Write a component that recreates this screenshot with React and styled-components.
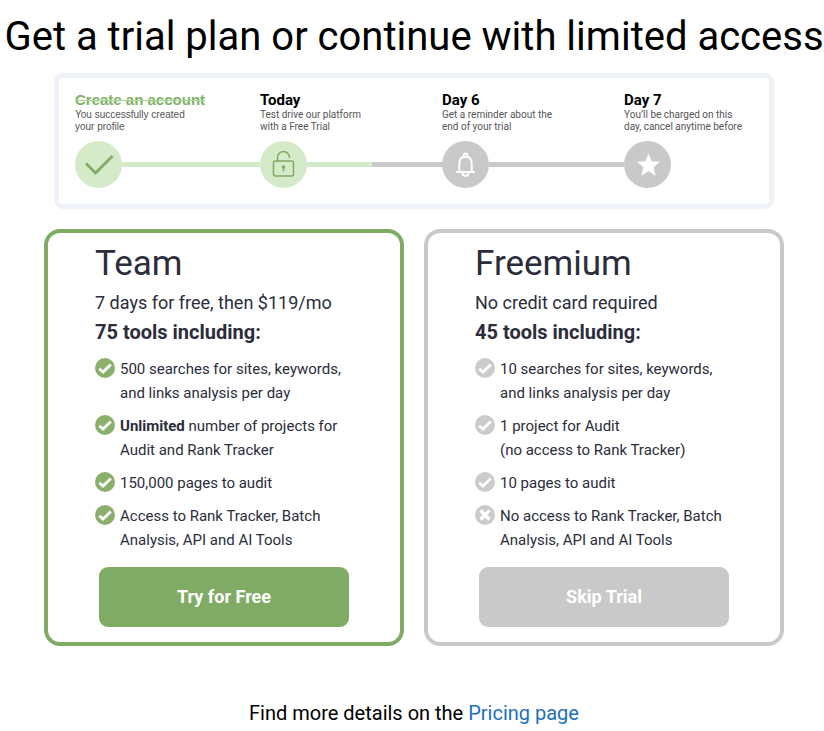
import React from 'react';
import styled, { createGlobalStyle, css } from 'styled-components';

const GlobalStyle = createGlobalStyle`
  * {
    box-sizing: border-box;
  }

  body {
    margin: 0;
    background-color: #fff;
    color: #000;
    font-family: Roboto, 'Liberation Sans', sans-serif;
  }
`;

const green = '#80ab65';
const gray = '#c9c9c9';

const Page = styled.main`
  display: flex;
  flex-direction: column;
  align-items: center;
  padding: 13px 0 0 4px;
`;

const Title = styled.h1`
  margin: 0 0 12px;
  font-size: 40px;
  font-weight: 400;
  line-height: 48px;
  text-align: center;
`;

const Timeline = styled.ol`
  display: grid;
  grid-template-columns: 185fr 182fr 182fr 129fr;
  width: 100%;
  max-width: 720px;
  margin: 0 0 20px;
  padding: 13px 16px 16px;
  list-style: none;
  border: 5px solid #eff3f8;
  border-radius: 9px;
`;

const StepTitle = styled.h2`
  margin: 0;
  font-size: 15px;
  font-weight: 700;
  line-height: 18px;
`;

const StepText = styled.p`
  margin: 0 0 8px;
  font-size: 10px;
  line-height: 12px;
  color: #555;
  white-space: nowrap;
`;

const Step = styled.li`
  ${({ $done }) =>
    $done &&
    css`
      font-family: 'Liberation Sans', sans-serif;

      ${StepTitle} {
        color: #7fb366;
        text-decoration: line-through 1px #a9d496;
      }
    `}
`;

const Track = styled.div`
  display: flex;
  align-items: center;
`;

const Circle = styled.div`
  display: flex;
  justify-content: center;
  align-items: center;
  width: 47px;
  height: 47px;
  border-radius: 50%;
  color: ${({ $active }) => ($active ? green : '#fff')};
  background-color: ${({ $active }) => ($active ? '#d5eac8' : gray)};
`;

const lines = {
  done: '#d5eac8',
  half: `linear-gradient(90deg, #d5eac8 48%, ${gray} 48%)`,
  todo: gray,
};

const Line = styled.div`
  flex: 1;
  height: 5px;
  background: ${({ $type }) => lines[$type]};
`;

const Plans = styled.section`
  display: grid;
  grid-template-columns: 1fr 1fr;
  gap: 20px;
  width: 100%;
  max-width: 740px;
`;

const Card = styled.article`
  display: flex;
  flex-direction: column;
  padding: 7px 47px 15px;
  border: 4px solid ${({ $color }) => $color};
  border-radius: 16px;
  color: #2b2d3b;
`;

const PlanName = styled.h2`
  margin: 0;
  font-size: 35px;
  font-weight: 400;
  line-height: 48px;
`;

const Price = styled.p`
  margin: 0;
  font-size: 18px;
  line-height: 30px;
`;

const Tools = styled.p`
  margin: 0 0 11px;
  font-size: 20px;
  font-weight: 700;
  line-height: 28px;
`;

const Features = styled.ul`
  display: flex;
  flex-direction: column;
  gap: 9px;
  margin: 0 0 15px;
  padding: 0;
  list-style: none;
`;

const Feature = styled.li`
  display: flex;
  align-items: flex-start;
  gap: 5px;
  font-size: 15px;
  line-height: 24px;

  svg {
    flex: none;
    margin-top: 1px;
  }
`;

const Button = styled.button`
  align-self: center;
  width: 100%;
  max-width: 250px;
  height: 60px;
  padding: 0 0 2px;
  border: none;
  border-radius: 9px;
  font-family: inherit;
  font-size: 18px;
  font-weight: 700;
  color: #fff;
  background-color: ${({ $color }) => $color};
  cursor: pointer;
`;

const Details = styled.p`
  margin: 55px 0 0;
  font-size: 20px;
  line-height: 24px;
`;

const Link = styled.a`
  color: #1c6fc0;
  text-decoration: none;
`;

const DoneIcon = () => (
  <svg width="47" height="47" viewBox="0 0 47 47" fill="none" aria-hidden="true">
    <path d="M11 22.5L20.5 32L37.5 15" stroke="currentColor" strokeWidth="2.7" />
  </svg>
);

const LockIcon = () => (
  <svg width="47" height="47" viewBox="0 0 47 47" fill="none" aria-hidden="true">
    <g stroke="currentColor" strokeWidth="1.5">
      <rect x="13.5" y="20" width="20" height="15" rx="2" />
      <path d="M17.5 20v-3.5a6 6 0 0 1 12 0" strokeLinecap="round" />
    </g>
    <circle cx="23.5" cy="26" r="1.7" fill="currentColor" />
    <path d="M23.5 26v4.5" stroke="currentColor" strokeWidth="1.5" />
  </svg>
);

const BellIcon = () => (
  <svg width="47" height="47" viewBox="0 0 47 47" fill="none" aria-hidden="true">
    <g stroke="currentColor" strokeWidth="2" strokeLinecap="round" strokeLinejoin="round">
      <path d="M15 31h17M17.3 31v-8.5c0-4.2 2.5-6.7 6.2-6.7s6.2 2.5 6.2 6.7V31" />
      <path d="M21.6 15.8v-1.3a1.9 1.9 0 0 1 3.8 0v1.3" />
      <path d="M20.5 31.5c0 2 1.2 3.4 3 3.4s3-1.4 3-3.4" />
    </g>
  </svg>
);

const StarIcon = () => (
  <svg width="47" height="47" viewBox="0 0 47 47" aria-hidden="true">
    <path
      d="M24.5 13L27.5 20.5L35.5 21L29.4 26.2L31.3 34.3L24.5 30L17.7 34.3L19.6 26.2L13.5 21L21.5 20.5Z"
      fill="currentColor"
      stroke="currentColor"
      strokeWidth="0.5"
      strokeLinejoin="round"
    />
  </svg>
);

const FeatureIcon = ({ color, missing }) => (
  <svg width="20" height="20" viewBox="0 0 20 20" fill="none" aria-hidden="true">
    <circle cx="10" cy="10" r="10" fill={color} />
    <path
      d={missing ? 'M5.5 5.5L14.5 14.5M14.5 5.5L5.5 14.5' : 'M4.3 10.8L8 14L15.8 6.4'}
      stroke="#fff"
      strokeWidth={missing ? 3.4 : 2.8}
    />
  </svg>
);

const steps = [
  {
    title: 'Create an account',
    text: ['You successfully created', 'your profile'],
    icon: <DoneIcon />,
    done: true,
    active: true,
    line: 'done',
  },
  {
    title: 'Today',
    text: ['Test drive our platform', 'with a Free Trial'],
    icon: <LockIcon />,
    active: true,
    line: 'half',
  },
  {
    title: 'Day 6',
    text: ['Get a reminder about the', 'end of your trial'],
    icon: <BellIcon />,
    line: 'todo',
  },
  {
    title: 'Day 7',
    text: ['You’ll be charged on this', 'day, cancel anytime before'],
    icon: <StarIcon />,
  },
];

const plans = [
  {
    name: 'Team',
    price: '7 days for free, then $119/mo',
    tools: '75 tools including:',
    color: green,
    iconColor: '#8bb06c',
    button: 'Try for Free',
    features: [
      { text: '500 searches for sites, keywords, and links analysis per day' },
      {
        text: (
          <>
            <strong>Unlimited</strong> number of projects for Audit and Rank Tracker
          </>
        ),
      },
      { text: '150,000 pages to audit' },
      { text: 'Access to Rank Tracker, Batch Analysis, API and AI Tools' },
    ],
  },
  {
    name: 'Freemium',
    price: 'No credit card required',
    tools: '45 tools including:',
    color: gray,
    iconColor: '#cbcbcb',
    button: 'Skip Trial',
    features: [
      { text: '10 searches for sites, keywords, and links analysis per day' },
      {
        text: (
          <>
            1 project for Audit
            <br />
            (no access to Rank Tracker)
          </>
        ),
      },
      { text: '10 pages to audit' },
      { text: 'No access to Rank Tracker, Batch Analysis, API and AI Tools', missing: true },
    ],
  },
];

const App = () => (
  <>
    <GlobalStyle />
    <Page>
      <Title>Get a trial plan or continue with limited access</Title>
      <Timeline>
        {steps.map(({ title, text, icon, done, active, line }) => (
          <Step key={title} $done={done}>
            <StepTitle>{title}</StepTitle>
            <StepText>
              {text[0]}
              <br />
              {text[1]}
            </StepText>
            <Track>
              <Circle $active={active}>{icon}</Circle>
              {line && <Line $type={line} />}
            </Track>
          </Step>
        ))}
      </Timeline>
      <Plans>
        {plans.map(({ name, price, tools, color, iconColor, button, features }) => (
          <Card key={name} $color={color}>
            <PlanName>{name}</PlanName>
            <Price>{price}</Price>
            <Tools>{tools}</Tools>
            <Features>
              {features.map(({ text, missing }, index) => (
                <Feature key={index}>
                  <FeatureIcon color={iconColor} missing={missing} />
                  <span>{text}</span>
                </Feature>
              ))}
            </Features>
            <Button type="button" $color={color}>
              {button}
            </Button>
          </Card>
        ))}
      </Plans>
      <Details>
        Find more details on the <Link href="#pricing">Pricing page</Link>
      </Details>
    </Page>
  </>
);

export default App;
